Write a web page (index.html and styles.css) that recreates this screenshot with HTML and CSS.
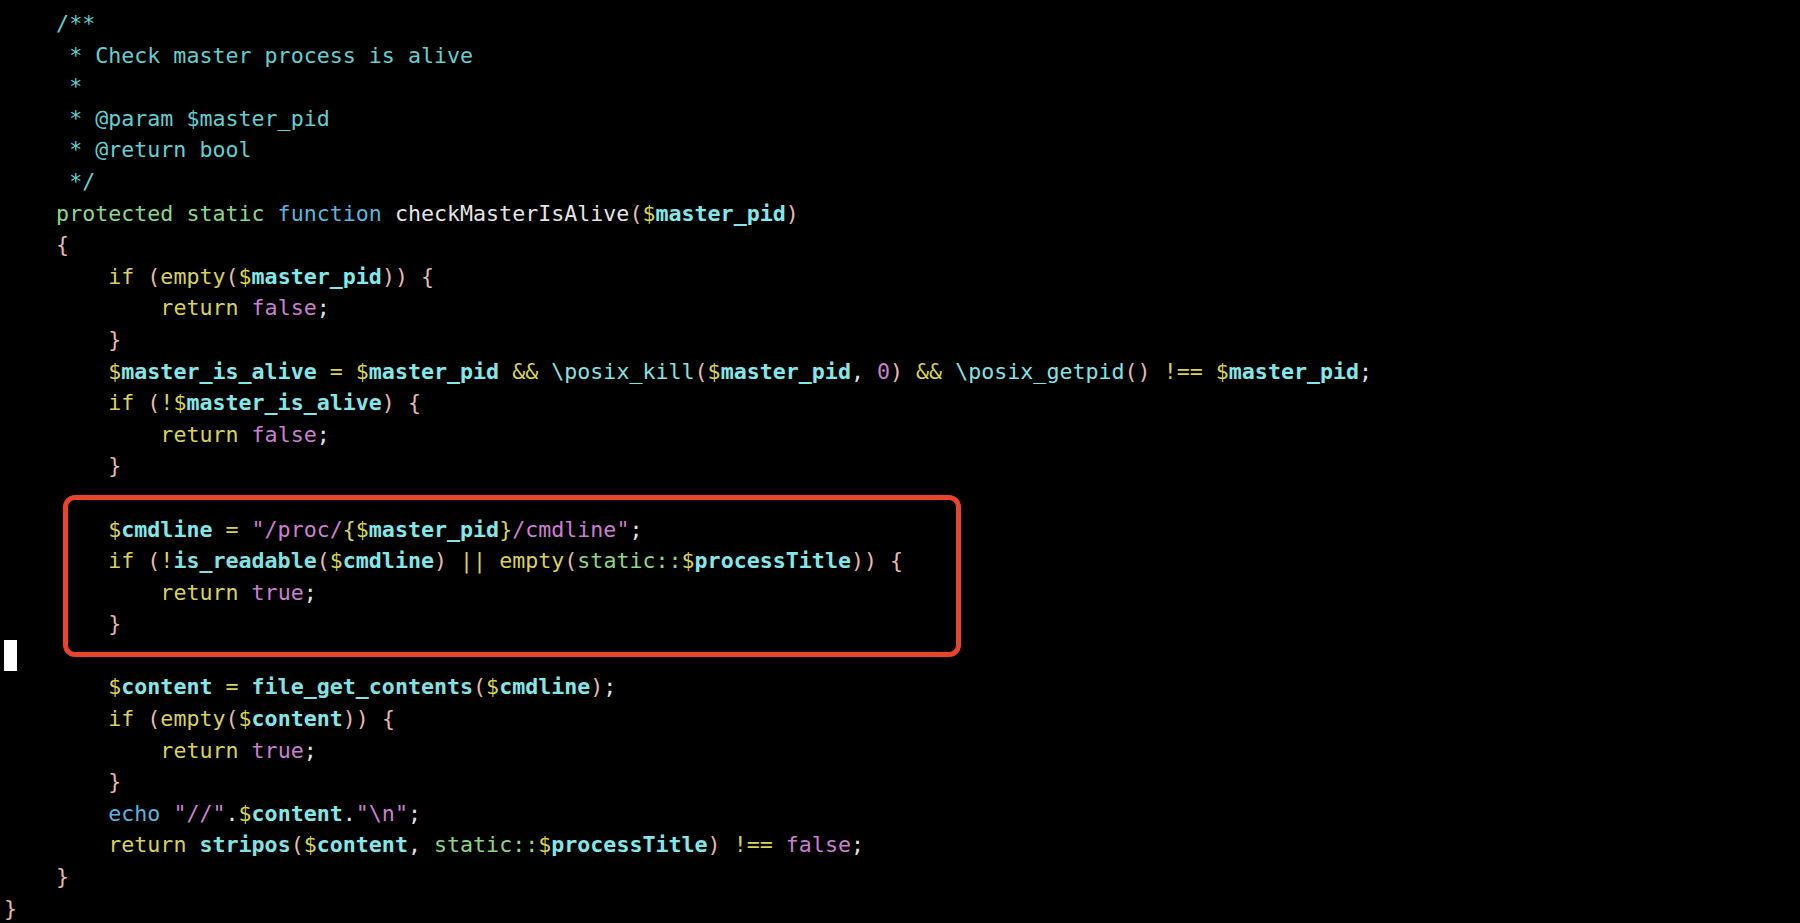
FILE: index.html
```html
<!DOCTYPE html>
<html>
<head>
<meta charset="utf-8">
<link rel="stylesheet" href="styles.css">
</head>
<body>
<div class="editor">
<pre class="code"><span class="cm">    /**</span>
<span class="cm">     * Check master process is alive</span>
<span class="cm">     *</span>
<span class="cm">     * @param $master_pid</span>
<span class="cm">     * @return bool</span>
<span class="cm">     */</span>
<span class="st">    protected static</span> <span class="kw">function</span> <span class="fn">checkMasterIsAlive</span><span class="pn">(</span><span class="dl">$</span><span class="vr">master_pid</span><span class="pn">)</span>
<span class="pn">    {</span>
        <span class="op">if</span> <span class="pn">(</span><span class="op">empty</span><span class="pn">(</span><span class="dl">$</span><span class="vr">master_pid</span><span class="pn">))</span> <span class="pn">{</span>
            <span class="op">return</span> <span class="cn">false</span><span class="tx">;</span>
<span class="pn">        }</span>
        <span class="dl">$</span><span class="vr">master_is_alive</span> <span class="op">=</span> <span class="dl">$</span><span class="vr">master_pid</span> <span class="op">&amp;&amp;</span> <span class="bi">\posix_kill</span><span class="pn">(</span><span class="dl">$</span><span class="vr">master_pid</span><span class="tx">,</span> <span class="cn">0</span><span class="pn">)</span> <span class="op">&amp;&amp;</span> <span class="bi">\posix_getpid</span><span class="pn">()</span> <span class="op">!==</span> <span class="dl">$</span><span class="vr">master_pid</span><span class="tx">;</span>
        <span class="op">if</span> <span class="pn">(</span><span class="op">!</span><span class="dl">$</span><span class="vr">master_is_alive</span><span class="pn">)</span> <span class="pn">{</span>
            <span class="op">return</span> <span class="cn">false</span><span class="tx">;</span>
<span class="pn">        }</span>

        <span class="dl">$</span><span class="vr">cmdline</span> <span class="op">=</span> <span class="cn">"/proc/</span><span class="op">{</span><span class="dl">$</span><span class="vr">master_pid</span><span class="op">}</span><span class="cn">/cmdline"</span><span class="tx">;</span>
        <span class="op">if</span> <span class="pn">(</span><span class="op">!</span><span class="bi bb">is_readable</span><span class="pn">(</span><span class="dl">$</span><span class="vr">cmdline</span><span class="pn">)</span> <span class="op">||</span> <span class="op">empty</span><span class="pn">(</span><span class="st">static::</span><span class="dl">$</span><span class="vr">processTitle</span><span class="pn">))</span> <span class="pn">{</span>
            <span class="op">return</span> <span class="cn">true</span><span class="tx">;</span>
<span class="pn">        }</span>
<span class="cursor"> </span>
        <span class="dl">$</span><span class="vr">content</span> <span class="op">=</span> <span class="bi bb">file_get_contents</span><span class="pn">(</span><span class="dl">$</span><span class="vr">cmdline</span><span class="pn">)</span><span class="tx">;</span>
        <span class="op">if</span> <span class="pn">(</span><span class="op">empty</span><span class="pn">(</span><span class="dl">$</span><span class="vr">content</span><span class="pn">))</span> <span class="pn">{</span>
            <span class="op">return</span> <span class="cn">true</span><span class="tx">;</span>
<span class="pn">        }</span>
        <span class="kw">echo</span> <span class="cn">"//"</span><span class="tx">.</span><span class="dl">$</span><span class="vr">content</span><span class="tx">.</span><span class="cn">"\n"</span><span class="tx">;</span>
        <span class="op">return</span> <span class="bi bb">stripos</span><span class="pn">(</span><span class="dl">$</span><span class="vr">content</span><span class="tx">,</span> <span class="st">static::</span><span class="dl">$</span><span class="vr">processTitle</span><span class="pn">)</span> <span class="op">!==</span> <span class="cn">false</span><span class="tx">;</span>
<span class="pn">    }</span>
<span class="pn">}</span></pre>
<div class="highlight"></div>
</div>
</body>
</html>
```

FILE: styles.css
```css
html, body {
  margin: 0;
  padding: 0;
  background: #000;
}

.editor {
  position: relative;
  width: 1800px;
  height: 923px;
  overflow: hidden;
  background: #000;
}

.code {
  margin: 0;
  padding: 8px 0 0 4px;
  font-family: "DejaVu Sans Mono", "Liberation Mono", monospace;
  font-size: 21.65px;
  line-height: 31.6px;
  color: #e2e2e2;
  white-space: pre;
}

.cm { color: #62cfd2; }
.st { color: #8ad88a; }
.kw { color: #5cb3df; }
.fn { color: #e4e4e4; }
.pn { color: #e7b9b3; }
.dl { color: #d9d44e; }
.vr { color: #84e8ea; font-weight: bold; }
.op { color: #d8d25a; }
.cn { color: #cc7fd2; }
.bi { color: #84e2e4; }
.bb { font-weight: bold; }
.tx { color: #e2e2e2; }

.cursor {
  display: inline-block;
  width: 13px;
  height: 31.6px;
  vertical-align: top;
  background: #fff;
}

.highlight {
  position: absolute;
  left: 63px;
  top: 495px;
  width: 888px;
  height: 152px;
  border: 5px solid #e8432b;
  border-radius: 12px;
}
```
